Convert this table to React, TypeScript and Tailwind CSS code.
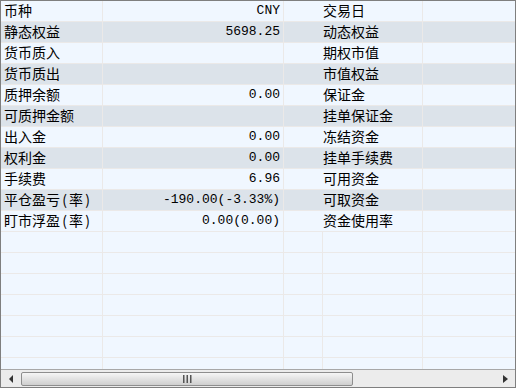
import React from "react";

const rows: [string, string, string][] = [
  ["币种", "CNY", "交易日"],
  ["静态权益", "5698.25", "动态权益"],
  ["货币质入", "", "期权市值"],
  ["货币质出", "", "市值权益"],
  ["质押余额", "0.00", "保证金"],
  ["可质押金额", "", "挂单保证金"],
  ["出入金", "0.00", "冻结资金"],
  ["权利金", "0.00", "挂单手续费"],
  ["手续费", "6.96", "可用资金"],
  ["平仓盈亏(率)", "-190.00(-3.33%)", "可取资金"],
  ["盯市浮盈(率)", "0.00(0.00)", "资金使用率"],
];

const cjk = { fontFamily: '"Noto Sans CJK SC", "Noto Sans", sans-serif' };
const mono = { fontFamily: '"Liberation Mono", "DejaVu Sans Mono", monospace' };

function Label({ text }: { text: string }) {
  const parts = text.split(/([()])/);
  return (
    <>
      {parts.map((p, i) =>
        p === "(" || p === ")" ? (
          <span key={i} className="inline-block w-[9px] text-center">
            {p}
          </span>
        ) : (
          <span key={i}>{p}</span>
        )
      )}
    </>
  );
}

export default function App() {
  return (
    <div className="w-[516px] h-[388px] border border-[#7f7f7f] bg-[#f0f7ff] flex flex-col overflow-hidden">
      <div className="h-[368px] flex flex-col overflow-hidden">
        {rows.map((r, i) => (
          <div
            key={i}
            className={`h-[21px] shrink-0 flex border-b border-[#ebe9e8] ${i % 2 === 1 ? "bg-[#dce3ea]" : "bg-[#f0f7ff]"}`}
          >
            <div className="w-[102px] shrink-0 border-r border-[#ebe9e8] pl-[3px] text-[14px] leading-[19px] text-black whitespace-nowrap" style={cjk}>
              <Label text={r[0]} />
            </div>
            <div className="w-[181px] shrink-0 border-r border-[#ebe9e8] pr-[3px] text-right text-[13px] leading-[20px] text-black whitespace-nowrap" style={mono}>
              {r[1]}
            </div>
            <div className="w-[39px] shrink-0" />
            <div className="w-[100px] shrink-0 border-r border-[#ebe9e8] text-[14px] leading-[19px] text-black whitespace-nowrap" style={cjk}>
              {r[2]}
            </div>
            <div className="flex-1" />
          </div>
        ))}
        {Array.from({ length: 7 }).map((_, i) => (
          <div key={"e" + i} className="h-[21px] shrink-0 flex border-b border-[#ebe9e8] bg-[#f0f7ff]">
            <div className="w-[102px] shrink-0 border-r border-[#ebe9e8]" />
            <div className="w-[181px] shrink-0 border-r border-[#ebe9e8]" />
            <div className="w-[39px] shrink-0 border-r border-[#ebe9e8]" />
            <div className="w-[100px] shrink-0 border-r border-[#ebe9e8]" />
            <div className="flex-1" />
          </div>
        ))}
      </div>
      <div className="h-[18px] shrink-0 border-t border-[#a8a8a8] bg-[#ececec] flex items-center">
        <div className="w-[20px] h-full flex items-center justify-center">
          <svg width="5" height="8" viewBox="0 0 5 8">
            <polygon points="4,0 0,4 4,8" fill="#333" />
          </svg>
        </div>
        <div className="w-[332px] h-[14px] rounded-[2px] border border-[#8e8e8e] bg-gradient-to-b from-[#f6f6f6] to-[#cfcfcf] flex items-center justify-center">
          <svg width="9" height="8" viewBox="0 0 9 8">
            <rect x="0" y="0" width="1.5" height="8" fill="#555" />
            <rect x="3.5" y="0" width="1.5" height="8" fill="#555" />
            <rect x="7" y="0" width="1.5" height="8" fill="#555" />
          </svg>
        </div>
        <div className="flex-1" />
        <div className="w-[20px] h-full flex items-center justify-center">
          <svg width="5" height="8" viewBox="0 0 5 8">
            <polygon points="0,0 5,4 0,8" fill="#333" />
          </svg>
        </div>
      </div>
    </div>
  );
}
